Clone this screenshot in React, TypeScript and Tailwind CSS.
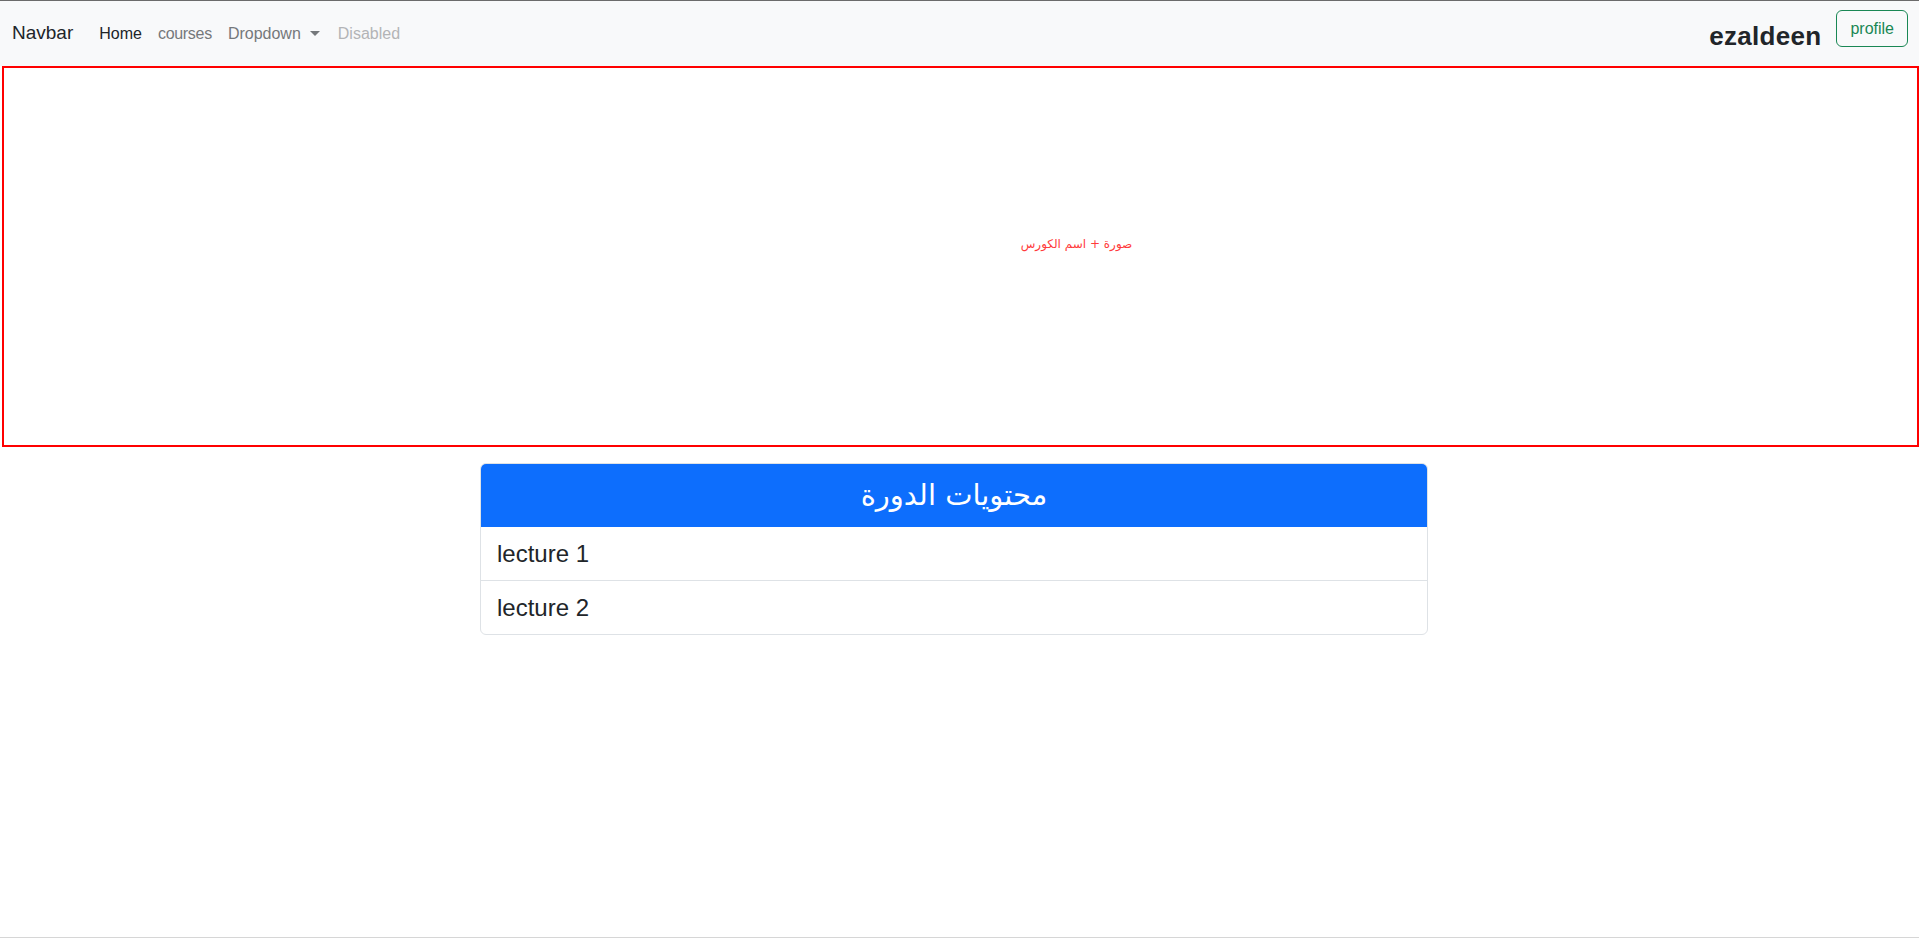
const sans = "font-['Segoe_UI','Liberation_Sans','DejaVu_Sans',sans-serif]";

function NavBar() {
    return (
        <nav className="flex items-center justify-between h-[65px] bg-[#f8f9fa] pl-[12px] pr-[11px]">
            <div className="flex items-center">
                <a className="text-[19px] text-[#212529] mr-[18px]">Navbar</a>
                <ul className="flex items-center text-[16px]">
                    <li className="px-[8px] text-[#212529]">Home</li>
                    <li className="px-[8px] text-[#75787b] tracking-[-0.3px]">courses</li>
                    <li className="flex items-center px-[8px] text-[#75787b]">
                        Dropdown
                        <span className="ml-[9px] w-0 h-0 border-x-[5px] border-x-transparent border-t-[5px] border-t-[#75787b]" />
                    </li>
                    <li className="px-[8px] ml-[2px] text-[#b3b4b6]">Disabled</li>
                </ul>
            </div>

            <div className="flex items-start">
                <h4 className="text-[26px] font-bold text-[#212529] mt-[8px] mr-[15px] leading-[36px] tracking-[0.3px]">
                    ezaldeen
                </h4>
                <button className="h-[37px] px-[13px] mb-[10px] border border-[#198754] rounded-[6px] text-[16px] text-[#198754]">
                    profile
                </button>
            </div>
        </nav>
    );
}

function CourseBanner() {
    return (
        <div className="ml-[2px] h-[381px] border-2 border-[#ff0000]">
            <div className="flex justify-center pt-[166px] pl-[232px]">
                <span dir="rtl" className="text-[12px] leading-[21px] text-[#ff3b3b] font-['DejaVu_Sans',sans-serif]">
                    صورة + اسم الكورس
                </span>
            </div>
        </div>
    );
}

function CourseContents() {
    const lectures = ["lecture 1", "lecture 2"];

    return (
        <div className="ml-[480px] mt-[16px] w-[948px] border border-[#dee2e6] rounded-[6px] overflow-hidden">
            <div className="h-[63px] bg-[#0d6efd] flex items-center justify-center">
                <h2 dir="rtl" className="text-[29px] text-white font-['DejaVu_Sans',sans-serif]">
                    محتويات الدورة
                </h2>
            </div>
            {lectures.map((lecture, i) => (
                <div
                    key={lecture}
                    className={
                        i === 0
                            ? "px-[16px] py-[8px] text-[24px] leading-[37px] text-[#212529]"
                            : "px-[16px] py-[8px] text-[24px] leading-[37px] text-[#212529] border-t border-[#dee2e6]"
                    }>
                    {lecture}
                </div>
            ))}
        </div>
    );
}

export default function App() {
    return (
        <div className={`${sans} h-[939px] flex flex-col bg-white border-t border-[#6b6b6b]`}>
            <NavBar />
            <CourseBanner />
            <CourseContents />
            <div className="mt-auto h-[2px] border-t border-[#d6d6d6]" />
        </div>
    );
}
